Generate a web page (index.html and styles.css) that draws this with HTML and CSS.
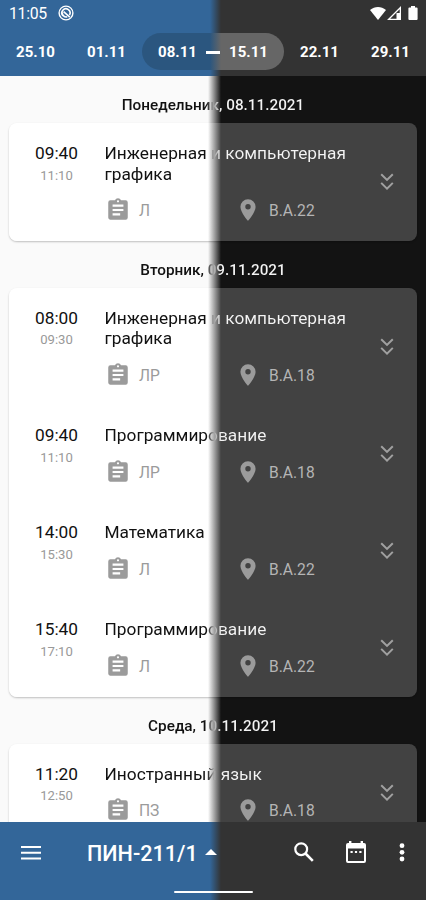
FILE: index.html
```html
<!DOCTYPE html>
<html lang="ru">
<head>
<meta charset="utf-8">
<title>ПИН-211/1</title>
<link rel="stylesheet" href="styles.css">
</head>
<body>
<svg class="sprite" aria-hidden="true">
  <symbol id="task" viewBox="0 0 24 24"><path fill-rule="evenodd" d="M19 3h-4.2a3 3 0 0 0-5.6 0H5a2 2 0 0 0-2 2v14c0 1.1.9 2 2 2h14a2 2 0 0 0 2-2V5a2 2 0 0 0-2-2zm-7 0a1 1 0 1 1 0 2 1 1 0 0 1 0-2zm2 14H7v-2h7zm3-4H7v-2h10zm0-4H7V7h10z"/></symbol>
  <symbol id="pin" viewBox="0 0 24 24"><path fill-rule="evenodd" d="M12 2a7 7 0 0 0-7 7c0 5.25 7 13 7 13s7-7.75 7-13a7 7 0 0 0-7-7zm0 9.500a2.500 2.500 0 1 1 0-5 2.500 2.500 0 0 1 0 5z"/></symbol>
  <symbol id="expand" viewBox="0 0 24 24"><path fill="none" stroke="currentColor" stroke-width="2" d="m6.200 4.200 5.800 5.700 5.800-5.700M6.200 12.900l5.800 5.700 5.800-5.700"/></symbol>
</svg>
<div class="screen">
  <header class="top">
    <div class="status">
      <span class="clock">11:05</span>
      <svg class="app" viewBox="0 0 16 16"><circle cx="8" cy="8" r="6.900" fill="none" stroke="currentColor" stroke-width="1.400"/><path d="M5 10.800A4.100 4.100 0 1 1 11.500 10M5.600 6.600l6.200 5.600M9.200 11.900A4 4 0 0 1 4.300 7.400" fill="none" stroke="currentColor" stroke-width="1.600"/></svg>
      <svg class="signals" viewBox="0 0 48 16"><path d="M0 4.100C4.800.1 11.200.1 16 4.100L8 14z"/><path d="M31 0v14H17zM29.700 3.200 20.200 12.700h6.300V7h3.200z" fill-rule="evenodd"/><path d="M41 1.400V0h4v1.400h1.600a1 1 0 0 1 1 1V13a1 1 0 0 1-1 1h-7.200a1 1 0 0 1-1-1V2.400a1 1 0 0 1 1-1z"/></svg>
    </div>
    <nav class="weeks">
      <span class="week">25.10</span>
      <span class="week">01.11</span>
      <span class="range"><span class="week">08.11</span><i class="dash"></i><span class="week">15.11</span></span>
      <span class="week">22.11</span>
      <span class="week">29.11</span>
    </nav>
  </header>

  <main class="days">
    <h2 class="day"><span>Понедельник, 08.11.2021</span></h2>
    <section class="card">
      <article class="lesson">
        <div class="time"><b>09:40</b><small>11:10</small></div>
        <div class="info"><h3>Инженерная и компьютерная графика</h3>
          <div class="meta"><svg><use href="#task"/></svg><span class="kind">Л</span><svg><use href="#pin"/></svg><span class="room">В.А.22</span></div></div>
        <svg class="more"><use href="#expand"/></svg>
      </article>
    </section>

    <h2 class="day"><span>Вторник, 09.11.2021</span></h2>
    <section class="card">
      <article class="lesson">
        <div class="time"><b>08:00</b><small>09:30</small></div>
        <div class="info"><h3>Инженерная и компьютерная графика</h3>
          <div class="meta"><svg><use href="#task"/></svg><span class="kind">ЛР</span><svg><use href="#pin"/></svg><span class="room">В.А.18</span></div></div>
        <svg class="more"><use href="#expand"/></svg>
      </article>
      <article class="lesson">
        <div class="time"><b>09:40</b><small>11:10</small></div>
        <div class="info"><h3>Программирование</h3>
          <div class="meta"><svg><use href="#task"/></svg><span class="kind">ЛР</span><svg><use href="#pin"/></svg><span class="room">В.А.18</span></div></div>
        <svg class="more"><use href="#expand"/></svg>
      </article>
      <article class="lesson">
        <div class="time"><b>14:00</b><small>15:30</small></div>
        <div class="info"><h3>Математика</h3>
          <div class="meta"><svg><use href="#task"/></svg><span class="kind">Л</span><svg><use href="#pin"/></svg><span class="room">В.А.22</span></div></div>
        <svg class="more"><use href="#expand"/></svg>
      </article>
      <article class="lesson">
        <div class="time"><b>15:40</b><small>17:10</small></div>
        <div class="info"><h3>Программирование</h3>
          <div class="meta"><svg><use href="#task"/></svg><span class="kind">Л</span><svg><use href="#pin"/></svg><span class="room">В.А.22</span></div></div>
        <svg class="more"><use href="#expand"/></svg>
      </article>
    </section>

    <h2 class="day"><span>Среда, 10.11.2021</span></h2>
    <section class="card">
      <article class="lesson">
        <div class="time"><b>11:20</b><small>12:50</small></div>
        <div class="info"><h3>Иностранный язык</h3>
          <div class="meta"><svg><use href="#task"/></svg><span class="kind">ПЗ</span><svg><use href="#pin"/></svg><span class="room">В.А.18</span></div></div>
        <svg class="more"><use href="#expand"/></svg>
      </article>
    </section>
  </main>

  <footer class="bottom">
    <div class="actions">
      <svg class="menu" viewBox="0 0 20 14"><path d="M0 0h20v2H0zM0 5.800h20v2H0zM0 11.600h20v2H0z"/></svg>
      <span class="group">ПИН-211/1</span>
      <svg class="caret" viewBox="0 0 12 6"><path d="M0 6 6 0l6 6z"/></svg>
      <svg class="search" viewBox="0 0 20 20"><circle cx="7.200" cy="7.200" r="5.900" fill="none" stroke="currentColor" stroke-width="2.200"/><path d="m11.500 11.500 7.300 7.300" stroke="currentColor" stroke-width="2.600"/></svg>
      <svg class="calendar" viewBox="0 0 20 22"><path fill-rule="evenodd" d="M3 0h2.400v2h9.200V0H17v2h1a2 2 0 0 1 2 2v16a2 2 0 0 1-2 2H2a2 2 0 0 1-2-2V4a2 2 0 0 1 2-2h1zM2 7.500V20h16V7.500z"/><path d="M4.500 10h2.200v2H4.500zM8.900 10h2.200v2H8.900zM13.300 10h2.200v2h-2.200z"/></svg>
      <svg class="dots" viewBox="0 0 6 19"><circle cx="3" cy="2.700" r="2.400"/><circle cx="3" cy="9.300" r="2.400"/><circle cx="3" cy="16" r="2.400"/></svg>
    </div>
    <i class="handle"></i>
  </footer>
</div>
</body>
</html>
```

FILE: styles.css
```css
/* Every split surface blends from the light theme to the dark one
   along the same vertical seam, fixed to the viewport. */
:root {
  --from: 208px;
  --to: 221px;
}

* { box-sizing: border-box; }

body {
  margin: 0;
  font-family: Roboto, sans-serif;
  color: #fff;
}

svg { fill: currentColor; display: block; flex: none; }

.sprite { position: absolute; width: 0; height: 0; }

.screen {
  width: 426px;
  height: 900px;
  overflow: hidden;
  display: flex;
  flex-direction: column;
  background: linear-gradient(90deg, #fafafa var(--from), #131313 var(--to)) fixed;
}

.top, .bottom {
  flex: none;
  background: linear-gradient(90deg, #336699 210px, #333333 var(--to)) fixed;
}

.top { height: 76px; }

.status {
  height: 28px;
  padding: 0 8px 0 9px;
  display: flex;
  align-items: center;
}

.clock { width: 39px; font-size: 15.8px; line-height: 28px; letter-spacing: -0.3px; }
.app { width: 16px; height: 16px; margin: -2px 0 0 10px; }
.signals { width: 48px; height: 16px; margin: 0 0 0 auto; }

.weeks { display: flex; padding-top: 5px; }

.week {
  width: 71px;
  height: 37px;
  padding-top: 1px;
  text-align: center;
  font-size: 15px;
  font-weight: 700;
  line-height: 37px;
}

.range {
  display: flex;
  align-items: center;
  width: 142px;
  border-radius: 19px;
  background: linear-gradient(90deg, #2b567f 210px, #666666 var(--to)) fixed;
}

.dash { width: 14px; height: 3px; margin: 1px -7px 0; background: #fff; }

.days { flex: 1; min-height: 0; overflow: hidden; padding: 0 9px; }

.day {
  height: 47.25px;
  margin: 0;
  padding-top: 11px;
  text-align: center;
  font-size: 15.3px;
  font-weight: 500;
  line-height: 36px;
}

.day span, h3 {
  color: transparent;
  background: linear-gradient(90deg, #111 calc(var(--from) - 2px), #999 213px, #f4f4f4 var(--to)) fixed;
  -webkit-background-clip: text;
  background-clip: text;
}

.card {
  border-radius: 8px;
  background: linear-gradient(90deg, #fff var(--from), #424242 var(--to)) fixed;
  box-shadow: 0 1px 2px rgba(0, 0, 0, 0.24);
}

.lesson { display: flex; padding: 19.75px 18px 18px 15px; }

.time { width: 65px; text-align: center; color: #111; }
.time b { display: block; font-size: 17.3px; font-weight: 400; line-height: 20.5px; }
.time small { display: block; margin-top: 3px; font-size: 13.1px; line-height: 18px; color: #999; }

.info { width: 262px; margin-left: 15.5px; }

h3 { margin: 0; font-size: 17.3px; font-weight: 400; line-height: 20.5px; }

.meta {
  display: flex;
  align-items: center;
  height: 24px;
  margin: 14.25px 0 0.5px;
  font-size: 15.6px;
  color: #9b9b9b;
}
.meta svg { width: 26px; height: 26px; }
.kind { width: 104px; padding: 1px 0 0 8.5px; }
.room { padding: 1px 0 0 8.5px; color: #b5b5b5; }

.more { width: 24px; height: 24px; margin: -1px 0 0 auto; align-self: center; color: #a0a0a0; }

.bottom { height: 78px; }
.actions { display: flex; align-items: center; height: 62px; padding: 0 21px 0 20.5px; }
.menu { width: 20px; height: 14px; margin-top: -1px; }
.group { margin-left: 46.5px; width: 110px; font-size: 21.6px; font-weight: 500; white-space: nowrap; }
.caret { width: 12px; height: 6px; margin: -2px 0 0 7.5px; }
.search { width: 20px; height: 20px; margin: -2px 0 0 77.5px; }
.calendar { width: 20px; height: 22px; margin: -2px 0 0 32px; }
.dots { width: 6px; height: 19px; margin: -1px 0 0 33px; }
.handle { display: block; width: 79px; height: 2px; margin: 7px auto 0; border-radius: 1px; background: #fff; }
```
